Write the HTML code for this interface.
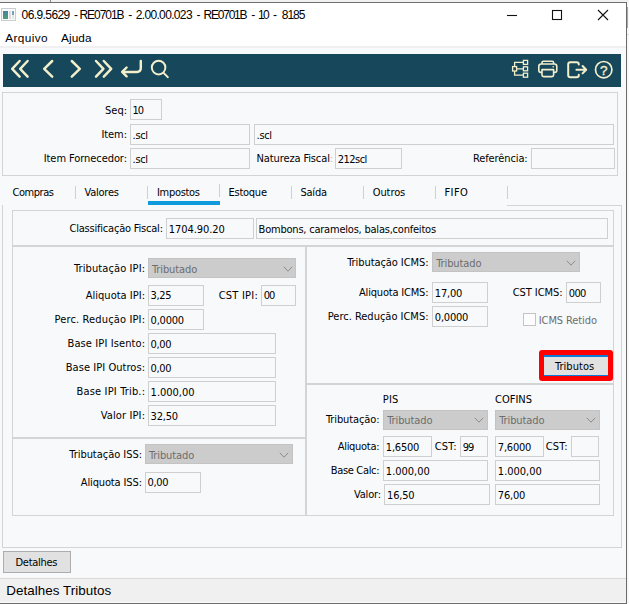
<!DOCTYPE html>
<html lang="pt-BR">
<head>
<meta charset="utf-8">
<title>06.9.5629 - RE0701B</title>
<style>
html,body{margin:0;padding:0;}
body{width:629px;height:604px;overflow:hidden;background:#fff;position:relative;font-family:'Liberation Sans',sans-serif;}
.b{position:absolute;box-sizing:border-box;}
.t{position:absolute;white-space:nowrap;}
svg{position:absolute;overflow:visible;}
</style>
</head>
<body>
<div class="b" style="left:0px;top:0px;width:629px;height:2px;background:#f1f1f1;"></div>
<div class="b" style="left:0px;top:2px;width:627px;height:1px;background:#6f6f6f;"></div>
<div class="b" style="left:50px;top:0px;width:1px;height:2px;background:#8a8a8a;"></div>
<div class="b" style="left:626px;top:2px;width:1px;height:602px;background:#6b6b6b;"></div>
<div class="b" style="left:627px;top:0px;width:2px;height:604px;background:#f8f8f8;"></div>
<div class="b" style="left:627px;top:0px;width:2px;height:2px;background:#f1f1f1;"></div>
<div class="b" style="left:627px;top:7px;width:1px;height:21px;background:#a9a9a9;"></div>
<div class="b" style="left:627px;top:34px;width:2px;height:1px;background:#dcdcdc;"></div>
<div class="b" style="left:0px;top:603px;width:627px;height:1px;background:#6b6b6b;"></div>
<svg style="left:1px;top:8px" width="15" height="13" viewBox="0 0 15 13">
<rect x="0.5" y="0.5" width="14" height="12" fill="#fafafa" stroke="#c9ccd1"/>
<defs><linearGradient id="ig" x1="0" y1="0" x2="0" y2="1"><stop offset="0" stop-color="#4a7fa6"/><stop offset="1" stop-color="#4fa06f"/></linearGradient></defs>
<rect x="2" y="3" width="5" height="8" fill="url(#ig)"/>
<rect x="8" y="3" width="2" height="8" fill="#dcdcdc"/>
<rect x="11" y="3" width="2" height="4" fill="#6fa3c4"/>
<rect x="11" y="7" width="2" height="4" fill="#e4e4e4"/>
</svg>
<span class="t" style="top:7px;font-family:'Liberation Sans',sans-serif;font-size:12px;line-height:16px;color:#000;letter-spacing:-0.586px;left:21.60px;">06.9.5629</span>
<span class="t" style="top:7px;font-family:'Liberation Sans',sans-serif;font-size:12px;line-height:16px;color:#000;left:74.00px;">-</span>
<span class="t" style="top:7px;font-family:'Liberation Sans',sans-serif;font-size:12px;line-height:16px;color:#000;letter-spacing:-1.029px;left:79.40px;">RE0701B</span>
<span class="t" style="top:7px;font-family:'Liberation Sans',sans-serif;font-size:12px;line-height:16px;color:#000;left:128.30px;">-</span>
<span class="t" style="top:7px;font-family:'Liberation Sans',sans-serif;font-size:12px;line-height:16px;color:#000;letter-spacing:-0.651px;left:135.70px;">2.00.00.023</span>
<span class="t" style="top:7px;font-family:'Liberation Sans',sans-serif;font-size:12px;line-height:16px;color:#000;left:196.50px;">-</span>
<span class="t" style="top:7px;font-family:'Liberation Sans',sans-serif;font-size:12px;line-height:16px;color:#000;letter-spacing:-1.246px;left:203.60px;">RE0701B</span>
<span class="t" style="top:7px;font-family:'Liberation Sans',sans-serif;font-size:12px;line-height:16px;color:#000;left:251.30px;">-</span>
<span class="t" style="top:7px;font-family:'Liberation Sans',sans-serif;font-size:12px;line-height:16px;color:#000;letter-spacing:-1.459px;left:257.90px;">10</span>
<span class="t" style="top:7px;font-family:'Liberation Sans',sans-serif;font-size:12px;line-height:16px;color:#000;left:272.90px;">-</span>
<span class="t" style="top:7px;font-family:'Liberation Sans',sans-serif;font-size:12px;line-height:16px;color:#000;letter-spacing:-1.034px;left:281.80px;">8185</span>
<svg style="left:500px;top:5px" width="120" height="22" viewBox="0 0 120 22">
<g stroke="#111" stroke-width="1.1" fill="none">
<path d="M7 10.5 H17"/>
<rect x="52.5" y="5.5" width="9" height="9"/>
<path d="M98 5 L108 15 M108 5 L98 15"/>
</g></svg>
<span class="t" style="top:30px;font-family:'Liberation Sans',sans-serif;font-size:11.8px;line-height:16px;color:#000;letter-spacing:0.367px;left:5.30px;">Arquivo</span>
<span class="t" style="top:30px;font-family:'Liberation Sans',sans-serif;font-size:11.8px;line-height:16px;color:#000;letter-spacing:0.078px;left:61.00px;">Ajuda</span>
<div class="b" style="left:0px;top:46px;width:626px;height:2px;background:#f0f0f0;"></div>
<div class="b" style="left:0px;top:48px;width:626px;height:555px;background:#f8f9fb;"></div>
<div class="b" style="left:3px;top:54px;width:618px;height:33px;background:#17475b;"></div>
<svg style="left:0px;top:54px" width="629" height="33" viewBox="0 54 629 33">
<g fill="none" stroke="#f4efcb" stroke-width="2.45" stroke-linecap="round" stroke-linejoin="round">
<path d="M19.6 61 L12.2 68.8 L19.6 76.6"/>
<path d="M27.6 61 L20.2 68.8 L27.6 76.6"/>
<path d="M52.2 61 L44.2 68.8 L52.2 76.6"/>
<path d="M71.8 61 L79.8 68.8 L71.8 76.6"/>
<path d="M96 61 L103.4 68.8 L96 76.6"/>
<path d="M103.8 61 L111.2 68.8 L103.8 76.6"/>
<path d="M140.8 61 V68 Q140.8 71.9 136.9 71.9 H122.6"/>
<path d="M126.6 67.5 L122.2 71.9 L126.6 76.3"/>
</g>
<g fill="none" stroke="#f4efcb" stroke-width="1.95" stroke-linecap="round">
<circle cx="158.6" cy="67.6" r="6.8"/>
<path d="M163.6 72.8 L167.8 77.2"/>
</g>
<g fill="none" stroke="#f4efcb" stroke-width="1.3">
<rect x="512.6" y="66.6" width="4" height="4.4"/>
<rect x="523.4" y="60.4" width="4.2" height="4"/>
<rect x="523.4" y="66.8" width="4.2" height="4"/>
<rect x="523.4" y="73.2" width="4.2" height="4"/>
<path d="M514.6 66.6 V62.4 H523.4 M516.6 68.8 H523.4 M514.6 71 V75.2 H523.4"/>
</g>
<g fill="none" stroke="#f4efcb" stroke-width="1.6" stroke-linejoin="round">
<path d="M542 64 V62.6 Q542 61.2 543.4 61.2 H552.2 Q553.6 61.2 553.6 62.6 V64"/>
<path d="M542 72.4 H541 Q538.8 72.4 538.8 70.2 V66.4 Q538.8 64 541.2 64 H554.4 Q556.8 64 556.8 66.4 V70.2 Q556.8 72.4 554.6 72.4 H553.6"/>
<path d="M542 69.6 H553.6 V75 Q553.6 76.6 552 76.6 H543.6 Q542 76.6 542 75 Z"/>
</g>
<circle cx="553.2" cy="66.8" r="0.8" fill="#f4efcb"/>
<g fill="none" stroke="#f4efcb" stroke-width="2" stroke-linecap="round" stroke-linejoin="round">
<path d="M578.8 64.6 V64.4 Q578.8 62.2 576.6 62.2 H570.4 Q568.2 62.2 568.2 64.4 V75 Q568.2 77.2 570.4 77.2 H576.6 Q578.8 77.2 578.8 75 V74.8"/>
<path d="M576.4 69.7 H585.6 M582.6 66 L586.2 69.7 L582.6 73.4"/>
</g>
<circle cx="603.7" cy="69.7" r="8.2" fill="none" stroke="#f4efcb" stroke-width="1.7"/>
<text x="603.8" y="74.6" text-anchor="middle" font-family="Liberation Sans, sans-serif" font-size="13.5" fill="#f4efcb" stroke="#f4efcb" stroke-width="0.35" >?</text>
</svg>
<div class="b" style="left:2px;top:92px;width:616px;height:84px;border:1px solid #d4d4d4;"></div>
<div class="b" style="left:130px;top:99px;width:32px;height:21px;border:1px solid #cfcfcf;background:#f8f9fb;"></div>
<span class="t" style="top:103px;font-family:'DejaVu Sans Condensed','Liberation Sans',sans-serif;font-size:11px;line-height:15px;color:#000;letter-spacing:-1.094px;left:132.60px;">10</span>
<div class="b" style="left:130px;top:124px;width:120px;height:21px;border:1px solid #cfcfcf;background:#f8f9fb;"></div>
<span class="t" style="top:128px;font-family:'DejaVu Sans Condensed','Liberation Sans',sans-serif;font-size:11px;line-height:15px;color:#000;letter-spacing:-0.333px;left:132.60px;">.scl</span>
<div class="b" style="left:254px;top:124px;width:360px;height:21px;border:1px solid #cfcfcf;background:#f8f9fb;"></div>
<span class="t" style="top:128px;font-family:'DejaVu Sans Condensed','Liberation Sans',sans-serif;font-size:11px;line-height:15px;color:#000;letter-spacing:-0.333px;left:256.60px;">.scl</span>
<div class="b" style="left:130px;top:148px;width:120px;height:21px;border:1px solid #cfcfcf;background:#f8f9fb;"></div>
<span class="t" style="top:152px;font-family:'DejaVu Sans Condensed','Liberation Sans',sans-serif;font-size:11px;line-height:15px;color:#000;letter-spacing:-0.333px;left:132.60px;">.scl</span>
<span class="t" style="top:103px;font-family:'DejaVu Sans Condensed','Liberation Sans',sans-serif;font-size:11px;line-height:15px;color:#000;right:502.00px;">Seq:</span>
<span class="t" style="top:127px;font-family:'DejaVu Sans Condensed','Liberation Sans',sans-serif;font-size:11px;line-height:15px;color:#000;letter-spacing:-0.094px;right:502.09px;">Item:</span>
<span class="t" style="top:151px;font-family:'DejaVu Sans Condensed','Liberation Sans',sans-serif;font-size:11px;line-height:15px;color:#000;letter-spacing:-0.070px;right:502.07px;">Item Fornecedor:</span>
<span class="t" style="top:151px;font-family:'DejaVu Sans Condensed','Liberation Sans',sans-serif;font-size:11px;line-height:15px;color:#000;letter-spacing:-0.121px;left:256.60px;">Natureza Fiscal</span>
<span class="t" style="top:151px;font-family:'DejaVu Sans Condensed','Liberation Sans',sans-serif;font-size:11px;line-height:15px;color:#bdbdbd;left:329.70px;">:</span>
<div class="b" style="left:335px;top:148px;width:67px;height:21px;border:1px solid #cfcfcf;background:#f8f9fb;"></div>
<span class="t" style="top:152px;font-family:'DejaVu Sans Condensed','Liberation Sans',sans-serif;font-size:11px;line-height:15px;color:#000;letter-spacing:-0.547px;left:337.85px;">212scl</span>
<span class="t" style="top:151px;font-family:'DejaVu Sans Condensed','Liberation Sans',sans-serif;font-size:11px;line-height:15px;color:#000;letter-spacing:-0.113px;left:473.00px;">Referência:</span>
<div class="b" style="left:531px;top:148px;width:84px;height:21px;border:1px solid #cfcfcf;background:#f8f9fb;"></div>
<span class="t" style="top:185px;font-family:'DejaVu Sans Condensed','Liberation Sans',sans-serif;font-size:11px;line-height:15px;color:#000;letter-spacing:-0.448px;left:12.50px;">Compras</span>
<span class="t" style="top:185px;font-family:'DejaVu Sans Condensed','Liberation Sans',sans-serif;font-size:11px;line-height:15px;color:#000;letter-spacing:-0.227px;left:84.50px;">Valores</span>
<span class="t" style="top:185px;font-family:'DejaVu Sans Condensed','Liberation Sans',sans-serif;font-size:11px;line-height:15px;color:#000;letter-spacing:-0.306px;left:157.00px;">Impostos</span>
<span class="t" style="top:185px;font-family:'DejaVu Sans Condensed','Liberation Sans',sans-serif;font-size:11px;line-height:15px;color:#000;letter-spacing:-0.250px;left:228.50px;">Estoque</span>
<span class="t" style="top:185px;font-family:'DejaVu Sans Condensed','Liberation Sans',sans-serif;font-size:11px;line-height:15px;color:#000;letter-spacing:-0.238px;left:300.50px;">Saída</span>
<span class="t" style="top:185px;font-family:'DejaVu Sans Condensed','Liberation Sans',sans-serif;font-size:11px;line-height:15px;color:#000;letter-spacing:-0.097px;left:372.75px;">Outros</span>
<span class="t" style="top:185px;font-family:'DejaVu Sans Condensed','Liberation Sans',sans-serif;font-size:11px;line-height:15px;color:#000;letter-spacing:0.385px;left:444.50px;">FIFO</span>
<div class="b" style="left:75px;top:186px;width:1px;height:13px;background:#d0d0d0;"></div>
<div class="b" style="left:147px;top:186px;width:1px;height:13px;background:#d0d0d0;"></div>
<div class="b" style="left:219px;top:184px;width:1px;height:13px;background:#d0d0d0;"></div>
<div class="b" style="left:291px;top:186px;width:1px;height:13px;background:#d0d0d0;"></div>
<div class="b" style="left:363px;top:186px;width:1px;height:13px;background:#d0d0d0;"></div>
<div class="b" style="left:435px;top:186px;width:1px;height:13px;background:#d0d0d0;"></div>
<div class="b" style="left:507px;top:186px;width:1px;height:13px;background:#d0d0d0;"></div>
<div class="b" style="left:148px;top:201px;width:72px;height:4px;background:#0f9ade;"></div>
<div class="b" style="left:2px;top:205px;width:1px;height:343px;background:#d4d4d4;"></div>
<div class="b" style="left:507px;top:205px;width:115px;height:1px;background:#d4d4d4;"></div>
<div class="b" style="left:621px;top:205px;width:1px;height:343px;background:#d4d4d4;"></div>
<div class="b" style="left:2px;top:547px;width:620px;height:1px;background:#d4d4d4;"></div>
<div class="b" style="left:12px;top:210px;width:602px;height:36px;border:1px solid #d4d4d4;"></div>
<span class="t" style="top:221px;font-family:'DejaVu Sans Condensed','Liberation Sans',sans-serif;font-size:11px;line-height:15px;color:#000;letter-spacing:-0.206px;right:466.21px;">Classificação Fiscal:</span>
<div class="b" style="left:166px;top:218px;width:88px;height:21px;border:1px solid #cfcfcf;background:#f8f9fb;"></div>
<span class="t" style="top:222px;font-family:'DejaVu Sans Condensed','Liberation Sans',sans-serif;font-size:11px;line-height:15px;color:#000;letter-spacing:-0.073px;left:168.85px;">1704.90.20</span>
<div class="b" style="left:256px;top:218px;width:352px;height:21px;border:1px solid #cfcfcf;background:#f8f9fb;"></div>
<span class="t" style="top:222px;font-family:'DejaVu Sans Condensed','Liberation Sans',sans-serif;font-size:11px;line-height:15px;color:#000;letter-spacing:-0.215px;left:258.60px;">Bombons, caramelos, balas,confeitos</span>
<div class="b" style="left:12px;top:246px;width:294px;height:192px;border:1px solid #d4d4d4;"></div>
<div class="b" style="left:148px;top:258px;width:148px;height:20px;background:#cccccc;border:1px solid #c3c3c3;"></div>
<span class="t" style="top:262px;font-family:'DejaVu Sans Condensed','Liberation Sans',sans-serif;font-size:11px;line-height:15px;color:#6d6d6d;letter-spacing:-0.112px;left:152.00px;">Tributado</span>
<svg style="left:282.6px;top:265.8px" width="10" height="6" viewBox="-5 -3 10 6"><path d="M-4.2 -2.2 L0 2.2 L4.2 -2.2" fill="none" stroke="#8c8c8c" stroke-width="1"/></svg>
<span class="t" style="top:261px;font-family:'DejaVu Sans Condensed','Liberation Sans',sans-serif;font-size:11px;line-height:15px;color:#000;letter-spacing:0.102px;right:483.90px;">Tributação IPI:</span>
<div class="b" style="left:148px;top:285px;width:56px;height:21px;border:1px solid #cfcfcf;background:#f8f9fb;"></div>
<span class="t" style="top:288px;font-family:'DejaVu Sans Condensed','Liberation Sans',sans-serif;font-size:11px;line-height:15px;color:#000;letter-spacing:-0.344px;left:150.60px;">3,25</span>
<span class="t" style="top:288px;font-family:'DejaVu Sans Condensed','Liberation Sans',sans-serif;font-size:11px;line-height:15px;color:#000;letter-spacing:0.012px;right:483.99px;">Aliquota IPI:</span>
<span class="t" style="top:288px;font-family:'DejaVu Sans Condensed','Liberation Sans',sans-serif;font-size:11px;line-height:15px;color:#000;letter-spacing:0.210px;left:218.75px;">CST IPI:</span>
<div class="b" style="left:261px;top:285px;width:35px;height:21px;border:1px solid #cfcfcf;background:#f8f9fb;"></div>
<span class="t" style="top:288px;font-family:'DejaVu Sans Condensed','Liberation Sans',sans-serif;font-size:11px;line-height:15px;color:#000;letter-spacing:-1.094px;left:263.85px;">00</span>
<div class="b" style="left:148px;top:309px;width:56px;height:21px;border:1px solid #cfcfcf;background:#f8f9fb;"></div>
<span class="t" style="top:313px;font-family:'DejaVu Sans Condensed','Liberation Sans',sans-serif;font-size:11px;line-height:15px;color:#000;letter-spacing:-0.225px;left:150.60px;">0,0000</span>
<span class="t" style="top:312px;font-family:'DejaVu Sans Condensed','Liberation Sans',sans-serif;font-size:11px;line-height:15px;color:#000;letter-spacing:0.142px;right:483.86px;">Perc. Redução IPI:</span>
<div class="b" style="left:148px;top:333px;width:128px;height:21px;border:1px solid #cfcfcf;background:#f8f9fb;"></div>
<span class="t" style="top:337px;font-family:'DejaVu Sans Condensed','Liberation Sans',sans-serif;font-size:11px;line-height:15px;color:#000;letter-spacing:-0.344px;left:150.60px;">0,00</span>
<span class="t" style="top:336px;font-family:'DejaVu Sans Condensed','Liberation Sans',sans-serif;font-size:11px;line-height:15px;color:#000;letter-spacing:0.107px;right:483.89px;">Base IPI Isento:</span>
<div class="b" style="left:148px;top:357px;width:128px;height:21px;border:1px solid #cfcfcf;background:#f8f9fb;"></div>
<span class="t" style="top:361px;font-family:'DejaVu Sans Condensed','Liberation Sans',sans-serif;font-size:11px;line-height:15px;color:#000;letter-spacing:-0.344px;left:150.60px;">0,00</span>
<span class="t" style="top:360px;font-family:'DejaVu Sans Condensed','Liberation Sans',sans-serif;font-size:11px;line-height:15px;color:#000;letter-spacing:0.050px;right:483.95px;">Base IPI Outros:</span>
<div class="b" style="left:148px;top:381px;width:128px;height:21px;border:1px solid #cfcfcf;background:#f8f9fb;"></div>
<span class="t" style="top:385px;font-family:'DejaVu Sans Condensed','Liberation Sans',sans-serif;font-size:11px;line-height:15px;color:#000;letter-spacing:-0.009px;left:150.60px;">1.000,00</span>
<span class="t" style="top:384px;font-family:'DejaVu Sans Condensed','Liberation Sans',sans-serif;font-size:11px;line-height:15px;color:#000;letter-spacing:0.164px;right:483.84px;">Base IPI Trib.:</span>
<div class="b" style="left:148px;top:405px;width:128px;height:21px;border:1px solid #cfcfcf;background:#f8f9fb;"></div>
<span class="t" style="top:409px;font-family:'DejaVu Sans Condensed','Liberation Sans',sans-serif;font-size:11px;line-height:15px;color:#000;letter-spacing:-0.207px;left:150.60px;">32,50</span>
<span class="t" style="top:408px;font-family:'DejaVu Sans Condensed','Liberation Sans',sans-serif;font-size:11px;line-height:15px;color:#000;letter-spacing:0.125px;right:483.88px;">Valor IPI:</span>
<div class="b" style="left:306px;top:246px;width:308px;height:138px;border:1px solid #d4d4d4;"></div>
<div class="b" style="left:432px;top:252px;width:148px;height:20px;background:#cccccc;border:1px solid #c3c3c3;"></div>
<span class="t" style="top:256px;font-family:'DejaVu Sans Condensed','Liberation Sans',sans-serif;font-size:11px;line-height:15px;color:#6d6d6d;letter-spacing:-0.112px;left:436.25px;">Tributado</span>
<svg style="left:566.4px;top:259.9px" width="10" height="6" viewBox="-5 -3 10 6"><path d="M-4.2 -2.2 L0 2.2 L4.2 -2.2" fill="none" stroke="#8c8c8c" stroke-width="1"/></svg>
<span class="t" style="top:255px;font-family:'DejaVu Sans Condensed','Liberation Sans',sans-serif;font-size:11px;line-height:15px;color:#000;letter-spacing:-0.079px;right:200.58px;">Tributação ICMS:</span>
<div class="b" style="left:432px;top:282px;width:56px;height:21px;border:1px solid #cfcfcf;background:#f8f9fb;"></div>
<span class="t" style="top:286px;font-family:'DejaVu Sans Condensed','Liberation Sans',sans-serif;font-size:11px;line-height:15px;color:#000;letter-spacing:-0.207px;left:434.85px;">17,00</span>
<span class="t" style="top:285px;font-family:'DejaVu Sans Condensed','Liberation Sans',sans-serif;font-size:11px;line-height:15px;color:#000;letter-spacing:-0.189px;right:200.69px;">Aliquota ICMS:</span>
<div class="b" style="left:432px;top:306px;width:56px;height:21px;border:1px solid #cfcfcf;background:#f8f9fb;"></div>
<span class="t" style="top:310px;font-family:'DejaVu Sans Condensed','Liberation Sans',sans-serif;font-size:11px;line-height:15px;color:#000;letter-spacing:-0.225px;left:434.85px;">0,0000</span>
<span class="t" style="top:309px;font-family:'DejaVu Sans Condensed','Liberation Sans',sans-serif;font-size:11px;line-height:15px;color:#000;letter-spacing:-0.010px;right:200.51px;">Perc. Redução ICMS:</span>
<span class="t" style="top:285px;font-family:'DejaVu Sans Condensed','Liberation Sans',sans-serif;font-size:11px;line-height:15px;color:#000;letter-spacing:-0.078px;left:512.75px;">CST ICMS:</span>
<div class="b" style="left:566px;top:282px;width:35px;height:21px;border:1px solid #cfcfcf;background:#f8f9fb;"></div>
<span class="t" style="top:286px;font-family:'DejaVu Sans Condensed','Liberation Sans',sans-serif;font-size:11px;line-height:15px;color:#000;letter-spacing:-0.695px;left:568.85px;">000</span>
<div class="b" style="left:523px;top:313px;width:13px;height:13px;border:1px solid #c4c4c4;background:#fdfdfd;"></div>
<span class="t" style="top:313px;font-family:'DejaVu Sans Condensed','Liberation Sans',sans-serif;font-size:11px;line-height:15px;color:#6d6d6d;letter-spacing:-0.098px;left:538.75px;">ICMS Retido</span>
<div class="b" style="left:539px;top:350px;width:74px;height:31px;background:#ff0000;border-radius:3px;"></div>
<div class="b" style="left:544px;top:355px;width:64px;height:21px;background:#e1e1e1;border-top:2px solid #0a7bd9;border-bottom:1px solid #0a7bd9;"></div>
<span class="t" style="top:359px;font-family:'DejaVu Sans Condensed','Liberation Sans',sans-serif;font-size:11px;line-height:15px;color:#000;letter-spacing:0.044px;left:555.00px;">Tributos</span>
<div class="b" style="left:12px;top:438px;width:294px;height:78px;border:1px solid #d4d4d4;"></div>
<div class="b" style="left:145px;top:444px;width:148px;height:20px;background:#cccccc;border:1px solid #c3c3c3;"></div>
<span class="t" style="top:448px;font-family:'DejaVu Sans Condensed','Liberation Sans',sans-serif;font-size:11px;line-height:15px;color:#6d6d6d;letter-spacing:-0.112px;left:149.00px;">Tributado</span>
<svg style="left:279.4px;top:451.8px" width="10" height="6" viewBox="-5 -3 10 6"><path d="M-4.2 -2.2 L0 2.2 L4.2 -2.2" fill="none" stroke="#8c8c8c" stroke-width="1"/></svg>
<span class="t" style="top:447px;font-family:'DejaVu Sans Condensed','Liberation Sans',sans-serif;font-size:11px;line-height:15px;color:#000;letter-spacing:-0.037px;right:487.04px;">Tributação ISS:</span>
<div class="b" style="left:145px;top:472px;width:56px;height:21px;border:1px solid #cfcfcf;background:#f8f9fb;"></div>
<span class="t" style="top:475px;font-family:'DejaVu Sans Condensed','Liberation Sans',sans-serif;font-size:11px;line-height:15px;color:#000;letter-spacing:-0.344px;left:147.60px;">0,00</span>
<span class="t" style="top:475px;font-family:'DejaVu Sans Condensed','Liberation Sans',sans-serif;font-size:11px;line-height:15px;color:#000;letter-spacing:-0.129px;right:487.13px;">Aliquota ISS:</span>
<div class="b" style="left:306px;top:384px;width:308px;height:132px;border:1px solid #d4d4d4;"></div>
<span class="t" style="top:392px;font-family:'DejaVu Sans Condensed','Liberation Sans',sans-serif;font-size:11px;line-height:15px;color:#000;letter-spacing:0.164px;left:382.75px;">PIS</span>
<span class="t" style="top:392px;font-family:'DejaVu Sans Condensed','Liberation Sans',sans-serif;font-size:11px;line-height:15px;color:#000;left:495.00px;">COFINS</span>
<div class="b" style="left:383px;top:410px;width:105px;height:20px;background:#cccccc;border:1px solid #c3c3c3;"></div>
<span class="t" style="top:413px;font-family:'DejaVu Sans Condensed','Liberation Sans',sans-serif;font-size:11px;line-height:15px;color:#6d6d6d;letter-spacing:-0.112px;left:387.25px;">Tributado</span>
<svg style="left:474.4px;top:417.4px" width="10" height="6" viewBox="-5 -3 10 6"><path d="M-4.2 -2.2 L0 2.2 L4.2 -2.2" fill="none" stroke="#8c8c8c" stroke-width="1"/></svg>
<div class="b" style="left:495px;top:410px;width:105px;height:20px;background:#cccccc;border:1px solid #c3c3c3;"></div>
<span class="t" style="top:413px;font-family:'DejaVu Sans Condensed','Liberation Sans',sans-serif;font-size:11px;line-height:15px;color:#6d6d6d;letter-spacing:-0.112px;left:499.25px;">Tributado</span>
<svg style="left:586.1px;top:417.4px" width="10" height="6" viewBox="-5 -3 10 6"><path d="M-4.2 -2.2 L0 2.2 L4.2 -2.2" fill="none" stroke="#8c8c8c" stroke-width="1"/></svg>
<span class="t" style="top:412px;font-family:'DejaVu Sans Condensed','Liberation Sans',sans-serif;font-size:11px;line-height:15px;color:#000;letter-spacing:-0.114px;right:249.61px;">Tributação:</span>
<div class="b" style="left:383px;top:436px;width:49px;height:21px;border:1px solid #cfcfcf;background:#f8f9fb;"></div>
<span class="t" style="top:440px;font-family:'DejaVu Sans Condensed','Liberation Sans',sans-serif;font-size:11px;line-height:15px;color:#000;letter-spacing:-0.225px;left:385.85px;">1,6500</span>
<span class="t" style="top:439px;font-family:'DejaVu Sans Condensed','Liberation Sans',sans-serif;font-size:11px;line-height:15px;color:#000;letter-spacing:-0.301px;right:249.80px;">Aliquota:</span>
<span class="t" style="top:439px;font-family:'DejaVu Sans Condensed','Liberation Sans',sans-serif;font-size:11px;line-height:15px;color:#000;letter-spacing:0.125px;left:434.75px;">CST:</span>
<div class="b" style="left:460px;top:436px;width:28px;height:21px;border:1px solid #cfcfcf;background:#f8f9fb;"></div>
<span class="t" style="top:440px;font-family:'DejaVu Sans Condensed','Liberation Sans',sans-serif;font-size:11px;line-height:15px;color:#000;letter-spacing:-1.094px;left:462.85px;">99</span>
<div class="b" style="left:495px;top:436px;width:49px;height:21px;border:1px solid #cfcfcf;background:#f8f9fb;"></div>
<span class="t" style="top:440px;font-family:'DejaVu Sans Condensed','Liberation Sans',sans-serif;font-size:11px;line-height:15px;color:#000;letter-spacing:-0.225px;left:497.85px;">7,6000</span>
<span class="t" style="top:439px;font-family:'DejaVu Sans Condensed','Liberation Sans',sans-serif;font-size:11px;line-height:15px;color:#000;letter-spacing:0.125px;left:545.75px;">CST:</span>
<div class="b" style="left:571px;top:436px;width:28px;height:21px;border:1px solid #cfcfcf;background:#f8f9fb;"></div>
<div class="b" style="left:383px;top:460px;width:105px;height:21px;border:1px solid #cfcfcf;background:#f8f9fb;"></div>
<span class="t" style="top:464px;font-family:'DejaVu Sans Condensed','Liberation Sans',sans-serif;font-size:11px;line-height:15px;color:#000;letter-spacing:-0.009px;left:385.85px;">1.000,00</span>
<span class="t" style="top:463px;font-family:'DejaVu Sans Condensed','Liberation Sans',sans-serif;font-size:11px;line-height:15px;color:#000;letter-spacing:-0.333px;right:249.83px;">Base Calc:</span>
<div class="b" style="left:495px;top:460px;width:105px;height:21px;border:1px solid #cfcfcf;background:#f8f9fb;"></div>
<span class="t" style="top:464px;font-family:'DejaVu Sans Condensed','Liberation Sans',sans-serif;font-size:11px;line-height:15px;color:#000;letter-spacing:-0.009px;left:497.85px;">1.000,00</span>
<div class="b" style="left:384px;top:484px;width:106px;height:21px;border:1px solid #cfcfcf;background:#f8f9fb;"></div>
<span class="t" style="top:488px;font-family:'DejaVu Sans Condensed','Liberation Sans',sans-serif;font-size:11px;line-height:15px;color:#000;letter-spacing:-0.207px;left:387.10px;">16,50</span>
<span class="t" style="top:487px;font-family:'DejaVu Sans Condensed','Liberation Sans',sans-serif;font-size:11px;line-height:15px;color:#000;letter-spacing:-0.200px;right:248.20px;">Valor:</span>
<div class="b" style="left:495px;top:484px;width:105px;height:21px;border:1px solid #cfcfcf;background:#f8f9fb;"></div>
<span class="t" style="top:488px;font-family:'DejaVu Sans Condensed','Liberation Sans',sans-serif;font-size:11px;line-height:15px;color:#000;letter-spacing:-0.207px;left:497.85px;">76,00</span>
<div class="b" style="left:3px;top:551px;width:68px;height:22px;background:#e1e1e1;border:1px solid #adadad;"></div>
<span class="t" style="top:555px;font-family:'DejaVu Sans Condensed','Liberation Sans',sans-serif;font-size:11px;line-height:15px;color:#000;letter-spacing:-0.277px;left:15.50px;">Detalhes</span>
<div class="b" style="left:0px;top:578px;width:626px;height:1px;background:#d9d9d9;"></div>
<div class="b" style="left:0px;top:579px;width:626px;height:23px;background:#f0f0f0;"></div>
<div class="b" style="left:0px;top:602px;width:626px;height:1px;background:#fbfbfb;"></div>
<span class="t" style="top:582px;font-family:'Liberation Sans',sans-serif;font-size:13.4px;line-height:17px;color:#000;letter-spacing:0.050px;left:6.30px;">Detalhes Tributos</span>
</body>
</html>
